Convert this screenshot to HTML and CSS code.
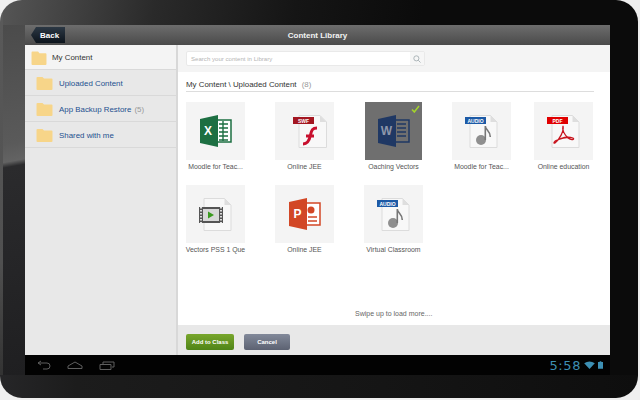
FILE: index.html
```html
<!DOCTYPE html>
<html lang="en">
<head>
<meta charset="utf-8">
<title>Content Library</title>
<link rel="stylesheet" href="styles.css">
</head>
<body>
<div class="tablet">
  <div class="screen">
    <header class="titlebar">
      <a class="back">Back</a>
      <h1 class="title">Content Library</h1>
    </header>
    <div class="app">
      <aside class="side">
        <div class="side-row side-root">
          <svg class="folder" viewBox="0 0 16 15"><path d="M0 1.500q0-1 1-1h6l1.500 2H15q1 0 1 1V14q0 1-1 1H1q-1 0-1-1z"/></svg>
          <span class="root-name">My Content</span>
        </div>
        <div class="side-row side-child">
          <svg class="folder" viewBox="0 0 16 13"><path d="M0 1q0-1 1-1h5l1.500 1.500H15q1 0 1 1V12q0 1-1 1H1q-1 0-1-1z"/></svg>
          <span class="child-name">Uploaded Content</span>
        </div>
        <div class="side-row side-child">
          <svg class="folder" viewBox="0 0 16 13"><path d="M0 1q0-1 1-1h5l1.500 1.500H15q1 0 1 1V12q0 1-1 1H1q-1 0-1-1z"/></svg>
          <span class="child-name">App Backup Restore</span><span class="count">(5)</span>
        </div>
        <div class="side-row side-child">
          <svg class="folder" viewBox="0 0 16 13"><path d="M0 1q0-1 1-1h5l1.500 1.500H15q1 0 1 1V12q0 1-1 1H1q-1 0-1-1z"/></svg>
          <span class="child-name">Shared with me</span>
        </div>
      </aside>
      <main class="main">
        <div class="searchbar">
          <div class="search">
            <span class="search-text">Search your content in Library</span>
            <span class="search-btn">
              <svg viewBox="0 0 10 10" width="8" height="8"><circle cx="4.200" cy="4.200" r="3.200"/><path d="M6.600 6.600 9.400 9.400"/></svg>
            </span>
          </div>
        </div>
        <div class="content">
          <div class="crumb">My Content \ Uploaded Content <span class="count">(8)</span></div>
          <div class="grid">
            <figure class="item">
              <div class="tile">
                <svg viewBox="0 0 32 32" width="32" height="32"><path fill="#fff" stroke="#1d6f42" stroke-width="1.500" d="M13 5h18v22H13z"/><path stroke="#1d6f42" stroke-width="1.400" d="M19 9h9M19 13h9M19 17h9M19 21h9M19 25h9M23 6v20"/><path fill="#1d6f42" d="M0 4 18 0v32L0 28z"/><text class="office-letter" x="8" y="20" text-anchor="middle">X</text></svg>
              </div>
              <figcaption>Moodle for Teac...</figcaption>
            </figure>
            <figure class="item">
              <div class="tile">
                <svg class="shifted" viewBox="0 0 34 33" width="34" height="33"><path fill="#f8f8f8" stroke="#dcdcdc" d="M6 .500h21l6.500 6.500v25.500H6z"/><path fill="#dedede" d="M27 .500v6.500h6.500z"/><path fill="#a31621" d="M0 2h21v7H0z"/><text class="tag" x="10.500" y="7.600" text-anchor="middle">SWF</text><path fill="none" stroke="#c8102e" stroke-width="3" d="M10 29c5 0 6.500-4 7.500-9s2-7 6.500-7M13 21h8"/></svg>
              </div>
              <figcaption>Online JEE</figcaption>
            </figure>
            <figure class="item">
              <div class="tile tile-selected">
                <svg viewBox="0 0 32 32" width="32" height="32"><path fill="#6f6f6f" stroke="#1f3864" stroke-width="1.500" d="M13 5h18v22H13z"/><path stroke="#1f3864" stroke-width="1.400" d="M19 9h9M19 13h9M19 17h9M19 21h9"/><path fill="#1f3864" d="M0 4 18 0v32L0 28z"/><text class="office-letter word-letter" x="8.500" y="20" text-anchor="middle">W</text></svg>
                <svg class="check" viewBox="0 0 9 8" width="9" height="8"><path d="M1 4.500 3.300 7 8 1"/></svg>
              </div>
              <figcaption>Oaching Vectors</figcaption>
            </figure>
            <figure class="item">
              <div class="tile">
                <svg viewBox="0 0 33 33" width="33" height="33"><use href="#page"/><path fill="#1c5aa6" d="M0 2h21v7H0z"/><text class="tag" x="10.500" y="7.600" text-anchor="middle">AUDIO</text><use href="#note"/></svg>
              </div>
              <figcaption>Moodle for Teac...</figcaption>
            </figure>
            <figure class="item">
              <div class="tile">
                <svg viewBox="0 0 33 33" width="33" height="33"><use href="#page"/><path fill="#e00000" d="M0 2h21v7H0z"/><text class="tag" x="10.500" y="7.600" text-anchor="middle">PDF</text><path fill="none" stroke="#c8141e" stroke-width="1.300" d="M16 11c1 5-3 13-8 17-2 1-1-2 2-3 5-2 10-4 16-2 2 1-1 3-5 0-3-3-6-8-5-12z"/></svg>
              </div>
              <figcaption>Online education</figcaption>
            </figure>
            <figure class="item">
              <div class="tile">
                <svg viewBox="0 0 33 33" width="33" height="33"><use href="#page"/><path fill="#555" d="M0 9h24v16H0z"/><path fill="#d8d8d8" d="M4 11h16v12H4z"/><path stroke="#ddd" stroke-width="2" stroke-dasharray="1.500 1.500" d="M2 9v16M22 9v16"/><path fill="#3a9a1e" d="m9 13.500 6 3.500-6 3.500z"/></svg>
              </div>
              <figcaption>Vectors PSS 1 Que</figcaption>
            </figure>
            <figure class="item">
              <div class="tile">
                <svg viewBox="0 0 32 32" width="32" height="32"><path fill="#fff" stroke="#d24726" stroke-width="1.500" d="M13 5h18v22H13z"/><circle cx="22" cy="12" r="3.500" fill="#d24726"/><path stroke="#d24726" stroke-width="1.400" d="M19 19h9M19 23h9"/><path fill="#d24726" d="M0 4 18 0v32L0 28z"/><text class="office-letter" x="8.500" y="20" text-anchor="middle">P</text></svg>
              </div>
              <figcaption>Online JEE</figcaption>
            </figure>
            <figure class="item">
              <div class="tile">
                <svg viewBox="0 0 33 33" width="33" height="33"><use href="#page"/><path fill="#1c5aa6" d="M0 2h21v7H0z"/><text class="tag" x="10.500" y="7.600" text-anchor="middle">AUDIO</text><use href="#note"/></svg>
              </div>
              <figcaption>Virtual Classroom</figcaption>
            </figure>
          </div>
          <p class="more">Swipe up to load more....</p>
        </div>
        <footer class="actions">
          <button class="btn btn-add">Add to Class</button>
          <button class="btn btn-cancel">Cancel</button>
        </footer>
      </main>
    </div>
    <nav class="sysbar">
      <svg class="nav-icon" viewBox="0 0 14 10" width="14" height="10"><path d="M4 1 1 3l3 2M1 3h9q3 0 3 3t-3 3H6"/></svg>
      <svg class="nav-icon" viewBox="0 0 16 8" width="16" height="8"><path d="M1 7.500V5l7-4 7 4v2.500z"/></svg>
      <svg class="nav-icon" viewBox="0 0 16 9" width="16" height="9"><path d="M1 3.500h11v5H1zM4 3V1h11v5h-2"/></svg>
      <div class="status">
        <span class="clock">5:58</span>
        <svg viewBox="0 0 12 9" width="11" height="8"><path fill="#3d8fb3" d="M0 2.500Q6-1.500 12 2.500L6 9z"/></svg>
        <svg viewBox="0 0 6 9" width="5" height="8"><path fill="#3d8fb3" d="M2 0h2v1h2v8H0V1h2z"/></svg>
      </div>
    </nav>
  </div>
</div>
<svg class="defs" width="0" height="0">
  <defs>
    <g id="page">
      <path fill="#f8f8f8" stroke="#dcdcdc" d="M5 .500h20.500l6.500 6.500v25.500H5z"/>
      <path fill="#dedede" d="M25.500 .500v6.500h6.500z"/>
    </g>
    <g id="note">
      <ellipse cx="16" cy="25" rx="5" ry="5" fill="#8f8f8f"/>
      <path fill="none" stroke="#777" stroke-width="1.600" d="M20.300 25V11c0 4 5.500 5 5 11"/>
    </g>
  </defs>
</svg>
</body>
</html>
```
FILE: styles.css
```css
* { box-sizing: border-box; }

html, body {
  margin: 0;
  width: 640px;
  height: 400px;
  overflow: hidden;
  background: #efefef;
  font-family: "Liberation Sans", Arial, sans-serif;
}

.defs { display: block; height: 0; }

/* Device shell: lower band, left rim and glare, then the top sheen */
.tablet {
  width: 638px;
  height: 398px;
  padding: 25px 28px 23px 25px;
  border-radius: 22px;
  background-color: #111;
  background-repeat: no-repeat;
  background-position: 0 100%, 0 0, 0 25px, 0 0;
  background-image:
    linear-gradient(90deg, #262628 0, #1c1c1c 12%, #151515 60%, #0e0e0e 100%),
    linear-gradient(#5a5a5a, #505050 70%, #333),
    linear-gradient(170deg, #4b4b4b 0, #5a5a5a 34%, #636363 39%, #2b2b2d 40.500%, #1f1f21 100%),
    linear-gradient(100deg, #565656 0, #4a4a4a 6%, #2a2a2a 22%, #151515 42%, #0b0b0b 60%, #0b0b0b 100%);
  background-size: 100% 23px, 3px 375px, 25px 350px, 100% 100%;
}

.screen {
  width: 585px;
  height: 350px;
  display: flex;
  flex-direction: column;
}

/* Title bar */
.titlebar {
  height: 20px;
  flex: none;
  position: relative;
  display: flex;
  align-items: center;
  justify-content: center;
  background: linear-gradient(#6d6d6d, #4a4a4a);
}

.title {
  margin: 0;
  color: #f2f2f2;
  font-size: 8px;
  font-weight: bold;
}

.back {
  position: absolute;
  left: 6px;
  top: 2px;
  width: 34px;
  height: 16px;
  padding-left: 9px;
  line-height: 17px;
  color: #fff;
  font-size: 8px;
  font-weight: bold;
  background: linear-gradient(#2c3844, #0c141c);
  clip-path: polygon(5px 0, 100% 0, 100% 100%, 5px 100%, 0 50%);
}

/* Body columns */
.app {
  flex: 1;
  min-height: 0;
  display: flex;
}

.side {
  width: 151px;
  flex: none;
  background: #e8e8e8;
}

.side-row {
  display: flex;
  align-items: center;
  border-bottom: 1px solid #d9d9d9;
  font-size: 7.900px;
}

.side-root {
  height: 25px;
  padding: 1px 0 0 6px;
  background: #f4f4f4;
}

.side-child {
  height: 26px;
  padding: 2px 0 0 11px;
}

.folder { fill: #f7d589; flex: none; }
.side-root .folder { width: 16px; height: 14px; margin-right: 5px; }
.side-child .folder { width: 17px; height: 13px; margin-right: 6px; }

.root-name { color: #333; }
.child-name { color: #24508f; }
.count { color: #999; margin-left: 3px; }

.main {
  flex: 1;
  min-width: 0;
  display: flex;
  flex-direction: column;
  background: #fff;
  border-left: 2px solid #d8d8d8;
}

.searchbar {
  height: 27px;
  flex: none;
  padding: 6px 0 0 8px;
  background: #f4f4f4;
}

.search {
  width: 239px;
  height: 15px;
  display: flex;
  align-items: center;
  justify-content: space-between;
  padding-left: 4px;
  background: #fff;
  border: 1px solid #e9e9e9;
  border-radius: 2px;
}

.search-text { color: #b5b5b5; font-size: 6.100px; }

.search-btn {
  width: 14px;
  height: 13px;
  display: flex;
  align-items: center;
  justify-content: center;
  background: #f6f6f6;
}

.search-btn svg { fill: none; stroke: #9aa6aa; stroke-width: 1; }

.content {
  flex: 1;
  min-height: 0;
  padding: 7px 16px 0 8px;
  display: flex;
  flex-direction: column;
}

.crumb {
  height: 13px;
  color: #333;
  font-size: 7.900px;
  line-height: 11px;
  border-bottom: 1px solid #ddd;
}

.grid {
  margin-top: 10px;
  display: grid;
  grid-template-columns: 89px 89px 88px 82px 59px;
  grid-auto-rows: 83px;
}

.item {
  margin: 0;
  width: 59px;
  display: flex;
  flex-direction: column;
  align-items: center;
}

.tile {
  position: relative;
  width: 59px;
  height: 58px;
  flex: none;
  display: flex;
  align-items: center;
  justify-content: center;
  background: #f4f4f4;
}

.tile-selected { width: 57px; background: #6f6f6f; }

.shifted { margin-left: 11px; }

.check {
  position: absolute;
  right: 2px;
  top: 3px;
  fill: none;
  stroke: #a5d62a;
  stroke-width: 1.500;
}

figcaption {
  margin-top: 2px;
  width: 70px;
  text-align: center;
  white-space: nowrap;
  color: #555;
  font-size: 6.900px;
  line-height: 9px;
}

.office-letter {
  fill: #fff;
  font-size: 12px;
  font-weight: bold;
  font-family: "Liberation Sans", Arial, sans-serif;
}

.word-letter { fill: #8d96aa; }

.tag {
  fill: #fff;
  font-size: 5px;
  font-weight: bold;
  font-family: "Liberation Sans", Arial, sans-serif;
}

.more {
  margin: auto 0 0;
  padding: 0 0 7px 169px;
  color: #666;
  font-size: 7px;
  line-height: 9px;
}

.actions {
  height: 30px;
  flex: none;
  display: flex;
  align-items: center;
  gap: 10px;
  padding: 3px 0 0 8px;
  background: #e8e8e8;
}

.btn {
  height: 16px;
  padding: 0;
  border: 0;
  border-radius: 2px;
  color: #fff;
  font-family: inherit;
  font-size: 6px;
  font-weight: bold;
}

.btn-add { width: 48px; background: linear-gradient(#78a62c, #4f8417); }
.btn-cancel { width: 46px; background: linear-gradient(#82899a, #5c6272); }

/* Android system bar */
.sysbar {
  height: 20px;
  flex: none;
  display: flex;
  align-items: center;
  gap: 16px;
  padding: 0 7px 0 12px;
  background: #020202;
}

.nav-icon {
  fill: none;
  stroke: #5e5e5e;
  stroke-width: 1;
}

.status {
  margin-left: auto;
  display: flex;
  align-items: center;
  gap: 3px;
}

.clock {
  color: #3d8fb3;
  font-family: "DejaVu Sans", sans-serif;
  font-size: 13px;
  letter-spacing: .6px;
}
```
